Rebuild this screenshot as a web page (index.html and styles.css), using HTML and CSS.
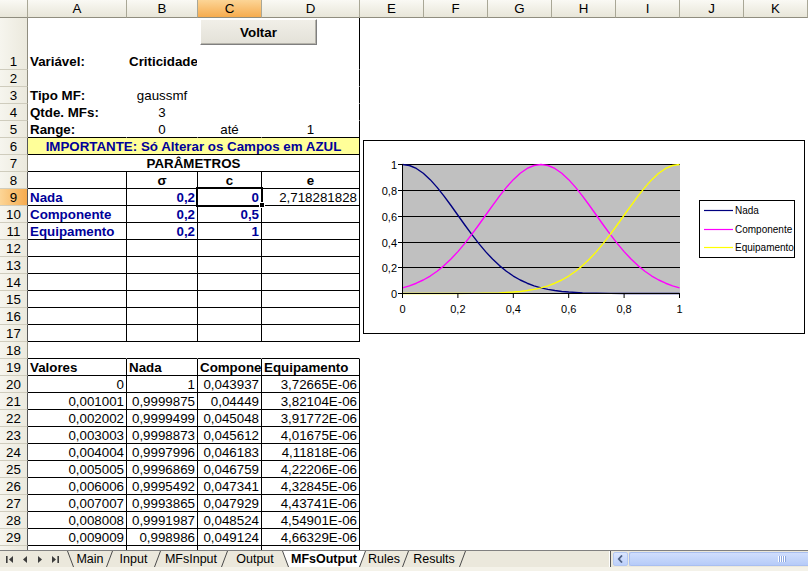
FILE: index.html
```html
<!DOCTYPE html>
<html lang="pt">
<head>
<meta charset="utf-8">
<title>MFsOutput</title>
<link rel="stylesheet" href="styles.css">
</head>
<body>
<div class="app">
  <div class="sheet">
    <div class="r hdr">
      <div class="ch"></div><div class="ch">A</div><div class="ch">B</div><div class="ch on">C</div><div class="ch">D</div><div class="ch">E</div><div class="ch">F</div><div class="ch">G</div><div class="ch">H</div><div class="ch">I</div><div class="ch">J</div><div class="ch">K</div>
    </div>
    <div class="r r1"><div class="rh">1</div><div class="b">Variável:</div><div class="b">Criticidade</div><div></div><div class="kr"></div></div>
    <div class="r"><div class="rh">2</div><div></div><div></div><div></div><div class="kr"></div></div>
    <div class="r"><div class="rh">3</div><div class="b">Tipo MF:</div><div class="ctr">gaussmf</div><div></div><div class="kr"></div></div>
    <div class="r"><div class="rh">4</div><div class="b">Qtde. MFs:</div><div class="ctr">3</div><div></div><div class="kr"></div></div>
    <div class="r"><div class="rh">5</div><div class="b kb">Range:</div><div class="ctr kb">0</div><div class="ctr kb">até</div><div class="ctr k">1</div></div>
    <div class="r"><div class="rh kk">6</div><div class="span4 k yel b blue ctr">IMPORTANTE: Só Alterar os Campos em AZUL</div></div>
    <div class="r"><div class="rh">7</div><div class="span4 k b ctr">PARÂMETROS</div></div>
    <div class="r"><div class="rh kk">8</div><div class="k"></div><div class="k b ctr">σ</div><div class="k b ctr">c</div><div class="k b ctr">e</div></div>
    <div class="r"><div class="rh kk on">9</div><div class="k b blue">Nada</div><div class="k b blue rt">0,2</div><div class="k b blue rt">0</div><div class="k rt">2,718281828</div></div>
    <div class="r"><div class="rh kk">10</div><div class="k b blue">Componente</div><div class="k b blue rt">0,2</div><div class="k b blue rt">0,5</div><div class="k"></div></div>
    <div class="r"><div class="rh kk">11</div><div class="k b blue">Equipamento</div><div class="k b blue rt">0,2</div><div class="k b blue rt">1</div><div class="k"></div></div>
    <div class="r"><div class="rh kk">12</div><div class="k"></div><div class="k"></div><div class="k"></div><div class="k"></div></div>
    <div class="r"><div class="rh kk">13</div><div class="k"></div><div class="k"></div><div class="k"></div><div class="k"></div></div>
    <div class="r"><div class="rh kk">14</div><div class="k"></div><div class="k"></div><div class="k"></div><div class="k"></div></div>
    <div class="r"><div class="rh kk">15</div><div class="k"></div><div class="k"></div><div class="k"></div><div class="k"></div></div>
    <div class="r"><div class="rh kk">16</div><div class="k"></div><div class="k"></div><div class="k"></div><div class="k"></div></div>
    <div class="r"><div class="rh kk">17</div><div class="k"></div><div class="k"></div><div class="k"></div><div class="k"></div></div>
    <div class="r"><div class="rh">18</div><div class="kb"></div><div class="kb"></div><div class="kb"></div><div class="kb"></div></div>
    <div class="r"><div class="rh kk">19</div><div class="k b">Valores</div><div class="k b">Nada</div><div class="k b clip">Compone</div><div class="k b">Equipamento</div></div>
    <div class="r"><div class="rh kk">20</div><div class="k rt">0</div><div class="k rt">1</div><div class="k rt">0,043937</div><div class="k rt">3,72665E-06</div></div>
    <div class="r"><div class="rh kk">21</div><div class="k rt">0,001001</div><div class="k rt">0,9999875</div><div class="k rt">0,04449</div><div class="k rt">3,82104E-06</div></div>
    <div class="r"><div class="rh kk">22</div><div class="k rt">0,002002</div><div class="k rt">0,9999499</div><div class="k rt">0,045048</div><div class="k rt">3,91772E-06</div></div>
    <div class="r"><div class="rh kk">23</div><div class="k rt">0,003003</div><div class="k rt">0,9998873</div><div class="k rt">0,045612</div><div class="k rt">4,01675E-06</div></div>
    <div class="r"><div class="rh kk">24</div><div class="k rt">0,004004</div><div class="k rt">0,9997996</div><div class="k rt">0,046183</div><div class="k rt">4,11818E-06</div></div>
    <div class="r"><div class="rh kk">25</div><div class="k rt">0,005005</div><div class="k rt">0,9996869</div><div class="k rt">0,046759</div><div class="k rt">4,22206E-06</div></div>
    <div class="r"><div class="rh kk">26</div><div class="k rt">0,006006</div><div class="k rt">0,9995492</div><div class="k rt">0,047341</div><div class="k rt">4,32845E-06</div></div>
    <div class="r"><div class="rh kk">27</div><div class="k rt">0,007007</div><div class="k rt">0,9993865</div><div class="k rt">0,047929</div><div class="k rt">4,43741E-06</div></div>
    <div class="r"><div class="rh kk">28</div><div class="k rt">0,008008</div><div class="k rt">0,9991987</div><div class="k rt">0,048524</div><div class="k rt">4,54901E-06</div></div>
    <div class="r"><div class="rh kk">29</div><div class="k rt">0,009009</div><div class="k rt">0,998986</div><div class="k rt">0,049124</div><div class="k rt">4,66329E-06</div></div>
    <div class="r"><div class="rh kk">30</div><div class="k rt">0,01001</div><div class="k rt">0,9987484</div><div class="k rt">0,04973</div><div class="k rt">4,78037E-06</div></div>

    <div class="btn">Voltar</div>
    <div class="selbox"></div>
    <div class="handle"></div>

    <div class="chart">
      <svg class="chartsvg" width="440" height="192" viewBox="0 0 440 192">
        <rect x="38" y="23" width="278" height="130" fill="#c0c0c0"/>
        <path d="M38 23.5H316M38 49.5H316M38 75.5H316M38 101.5H316M38 126.5H316" stroke="#000" stroke-width="1" fill="none"/>
        <svg x="38.5" y="23.5" width="277" height="129" viewBox="0 0 1000 1000" preserveAspectRatio="none" overflow="visible">
          <polyline class="crv" stroke="#000080" points="0,0 25,7.8 50,30.8 75,67.9 100,117.5 125,177.4 150,245.2 175,318.1 200,393.5 225,468.9 250,542.2 275,611.4 300,675.4 325,732.9 350,783.7 375,827.6 400,864.7 425,895.4 450,920.4 475,940.4 500,956.1 525,968.1 550,977.2 575,984 600,988.9 650,994.9 700,997.8 750,999.1 800,999.7 900,1000 1000,1000"/>
          <polyline class="crv" stroke="#ff00ff" points="0,956.1 25,940.4 50,920.4 75,895.4 100,864.7 125,827.6 150,783.7 175,732.9 200,675.4 225,611.4 250,542.2 275,468.9 300,393.5 325,318.1 350,245.2 375,177.4 400,117.5 425,67.9 450,30.8 475,7.8 500,0 525,7.8 550,30.8 575,67.9 600,117.5 625,177.4 650,245.2 675,318.1 700,393.5 725,468.9 750,542.2 775,611.4 800,675.4 825,732.9 850,783.7 875,827.6 900,864.7 925,895.4 950,920.4 975,940.4 1000,956.1"/>
          <polyline class="crv" stroke="#ffff00" points="0,1000 100,1000 200,999.7 250,999.1 300,997.8 350,994.9 400,988.9 425,984 450,977.2 475,968.1 500,956.1 525,940.4 550,920.4 575,895.4 600,864.7 625,827.6 650,783.7 675,732.9 700,675.4 725,611.4 750,542.2 775,468.9 800,393.5 825,318.1 850,245.2 875,177.4 900,117.5 925,67.9 950,30.8 975,7.8 1000,0"/>
        </svg>
        <path d="M38.5 23V153M34 152.5H316M34 23.5H38M34 49.5H38M34 75.5H38M34 101.5H38M34 126.5H38M38.5 153V157M93.9 153V157M149.3 153V157M204.7 153V157M260.1 153V157M315.5 153V157" stroke="#000" stroke-width="1" fill="none"/>
        <g class="lbl ax" text-anchor="end">
          <text x="33" y="27.5">1</text>
          <text x="33" y="53.5">0,8</text>
          <text x="33" y="79.5">0,6</text>
          <text x="33" y="105.5">0,4</text>
          <text x="33" y="130.5">0,2</text>
          <text x="33" y="156.5">0</text>
        </g>
        <g class="lbl ax" text-anchor="middle">
          <text x="38.5" y="172">0</text>
          <text x="93.9" y="172">0,2</text>
          <text x="149.3" y="172">0,4</text>
          <text x="204.7" y="172">0,6</text>
          <text x="260.1" y="172">0,8</text>
          <text x="315.5" y="172">1</text>
        </g>
        <rect x="335.5" y="59.5" width="95" height="57" fill="#fff" stroke="#000"/>
        <path d="M340 69.5H369" stroke="#000080" stroke-width="1.2"/>
        <path d="M340 88.5H369" stroke="#ff00ff" stroke-width="1.2"/>
        <path d="M340 106.5H369" stroke="#ffff00" stroke-width="1.2"/>
        <g class="lbl">
          <text x="371" y="73">Nada</text>
          <text x="371" y="92">Componente</text>
          <text x="371" y="110">Equipamento</text>
        </g>
      </svg>
    </div>
  </div>

  <div class="tabbar">
    <div class="nav">
      <svg width="8" height="7" viewBox="0 0 8 7"><rect x="0" y="0" width="1.6" height="7" fill="#3c3c3c"/><polygon points="7,0 3,3.5 7,7" fill="#3c3c3c"/></svg>
      <svg width="8" height="7" viewBox="0 0 8 7"><polygon points="6,0 2,3.5 6,7" fill="#3c3c3c"/></svg>
      <svg width="8" height="7" viewBox="0 0 8 7"><polygon points="2,0 6,3.5 2,7" fill="#3c3c3c"/></svg>
      <svg width="8" height="7" viewBox="0 0 8 7"><polygon points="1,0 5,3.5 1,7" fill="#3c3c3c"/><rect x="6.4" y="0" width="1.6" height="7" fill="#3c3c3c"/></svg>
    </div>
    <div class="tabs">
      <svg class="sep" width="7" height="16" viewBox="0 0 7 16"><path d="M0.5 0L6.5 16" stroke="#4a4a4a" fill="none"/></svg>
      <span class="tab t1">Main</span>
      <svg class="sep" width="7" height="16" viewBox="0 0 7 16"><path d="M0.5 16L6.5 0" stroke="#4a4a4a" fill="none"/></svg>
      <span class="tab t2">Input</span>
      <svg class="sep" width="7" height="16" viewBox="0 0 7 16"><path d="M0.5 16L6.5 0" stroke="#4a4a4a" fill="none"/></svg>
      <span class="tab t3">MFsInput</span>
      <svg class="sep" width="7" height="16" viewBox="0 0 7 16"><path d="M0.5 16L6.5 0" stroke="#4a4a4a" fill="none"/></svg>
      <span class="tab t4">Output</span>
      <svg class="sep" width="7" height="16" viewBox="0 0 7 16"><polygon points="0,0 7,0 7,16" fill="#fff"/><path d="M0.5 0L6.5 16" stroke="#4a4a4a" fill="none"/></svg>
      <span class="tab on t5">MFsOutput</span>
      <svg class="sep" width="7" height="16" viewBox="0 0 7 16"><polygon points="0,0 7,0 0,16" fill="#fff"/><path d="M0.5 16L6.5 0" stroke="#4a4a4a" fill="none"/></svg>
      <span class="tab t6">Rules</span>
      <svg class="sep" width="7" height="16" viewBox="0 0 7 16"><path d="M0.5 16L6.5 0" stroke="#4a4a4a" fill="none"/></svg>
      <span class="tab t7">Results</span>
      <svg class="sep" width="7" height="16" viewBox="0 0 7 16"><path d="M0.5 16L6.5 0" stroke="#4a4a4a" fill="none"/></svg>
    </div>
    <div class="split"></div>
    <div class="hs">
      <div class="hsbtn"><svg width="7" height="8" viewBox="0 0 7 8"><path d="M5 0.5L1.8 4L5 7.5" stroke="#4d6185" stroke-width="1.8" fill="none"/></svg></div>
      <div class="thumb"><svg class="grip" width="8" height="6" viewBox="0 0 8 6"><path d="M0.5 0V6M2.5 0V6M4.5 0V6M6.5 0V6" stroke="#fff" fill="none"/><path d="M1.5 0V6M3.5 0V6M5.5 0V6M7.5 0V6" stroke="#8ea8e0" fill="none"/></svg></div>
    </div>
  </div>
  <div class="foot"></div>
</div>
</body>
</html>
```

FILE: styles.css
```css
* { box-sizing: border-box; }
html, body { margin: 0; padding: 0; }
body {
  width: 808px;
  height: 571px;
  overflow: hidden;
  background: #fff;
  color: #000;
  font-family: "Liberation Sans", Arial, sans-serif;
  font-size: 13.33px;
}
.app { display: flex; flex-direction: column; width: 808px; height: 571px; }
.sheet { position: relative; height: 550px; overflow: hidden; background: #fff; }

.r {
  display: grid;
  grid-template-columns: 28px 99px 71px 64px 98px repeat(7, 64px);
  height: 17px;
}
.r.hdr { height: 18px; }
.r.r1 { height: 52px; }
.r > div {
  border-right: 1px solid transparent;
  border-bottom: 1px solid transparent;
  padding: 0 2px;
  line-height: 17px;
  overflow: hidden;
  white-space: nowrap;
}
.r.r1 > div { padding-top: 35px; }

.ch {
  background: linear-gradient(#faf9f4, #e8e6d9);
  border-right-color: #a9a796 !important;
  border-bottom-color: #8f8d7f !important;
  text-align: center;
}
.ch.on { background: linear-gradient(#fcd596, #f6ab4e); }
.rh {
  background: linear-gradient(90deg, #f6f5ee, #ebe9dd);
  border-right-color: #8f8d7f !important;
  border-bottom-color: #cfccbd !important;
  text-align: center;
  padding: 0 !important;
}
.rh.kk { border-right-color: #555 !important; }
.rh.on { background: linear-gradient(90deg, #fcd596, #f6ab4e); }
.r.r1 > .rh { padding-top: 35px !important; }

.kr { border-right-color: #000 !important; }
.kb { border-bottom-color: #000 !important; }
.k { border-right-color: #000 !important; border-bottom-color: #000 !important; }
.span4 { grid-column: 2 / span 4; }
.yel { background: #ffff99; }
.b { font-weight: bold; }
.blue { color: #000099; }
.ctr { text-align: center; }
.rt { text-align: right; }
.clip { text-overflow: clip; }

.btn {
  position: absolute;
  left: 200px;
  top: 19px;
  width: 117px;
  height: 26px;
  background: linear-gradient(#f1efe8, #e3e1d8);
  border: 1px solid;
  border-color: #fff #7f7f7f #7f7f7f #fff;
  box-shadow: inset -1px -1px 0 #b5b3aa;
  font-weight: bold;
  text-align: center;
  line-height: 25px;
}
.selbox {
  position: absolute;
  left: 196px;
  top: 187px;
  width: 67px;
  height: 20px;
  border: 2px solid #000;
}
.handle {
  position: absolute;
  left: 259px;
  top: 202px;
  width: 6px;
  height: 6px;
  background: #000;
  border: 1px solid #fff;
}

.chart {
  position: absolute;
  left: 363px;
  top: 140px;
  width: 442px;
  height: 194px;
  border: 1px solid #000;
  background: #fff;
}
.chartsvg { display: block; }
.crv { fill: none; stroke-width: 1.4; vector-effect: non-scaling-stroke; stroke-linejoin: round; }
.lbl { font-family: "Liberation Sans", Arial, sans-serif; font-size: 10px; fill: #000; }
.lbl.ax { font-size: 11px; }

.tabbar {
  display: flex;
  align-items: stretch;
  height: 17px;
  border-top: 1px solid #808080;
  background: #ebe8dc;
}
.nav {
  width: 67px;
  display: flex;
  align-items: center;
  justify-content: space-around;
  padding: 0 4px 0 2px;
}
.nav svg { display: block; }
.tabs {
  width: 540px;
  display: flex;
  align-items: stretch;
  font-size: 12.5px;
}
.sep { display: block; flex: none; }
.tab { line-height: 16px; padding: 0; text-align: center; white-space: nowrap; flex: none; }
.tab.on { background: #fff; font-weight: bold; }
.t1 { width: 32px; }
.t2 { width: 41px; }
.t3 { width: 60px; }
.t4 { width: 54px; }
.t5 { width: 70px; }
.t6 { width: 36px; }
.t7 { width: 50px; }
.split {
  width: 4px;
  border-right: 1px solid #555;
  box-shadow: inset -1px 0 0 #fff;
}
.hs {
  flex: 1;
  display: flex;
  align-items: center;
  padding: 0 0 0 2px;
}
.hsbtn {
  width: 15px;
  height: 14px;
  border: 1px solid #b4c8f2;
  border-radius: 2px;
  background: linear-gradient(#dbe6fe, #bccffa);
  display: flex;
  align-items: center;
  justify-content: center;
}
.hsbtn svg { display: block; }
.thumb {
  flex: 1;
  height: 14px;
  margin-left: 1px;
  border: 1px solid #a9bff0;
  border-right: none;
  border-radius: 2px 0 0 2px;
  background: linear-gradient(#d0defd, #b6cbf8);
  display: flex;
  align-items: center;
  justify-content: flex-end;
  padding-right: 22px;
}
.grip { display: block; }
.foot { flex: 1; background: #f4f2e9; }
```
